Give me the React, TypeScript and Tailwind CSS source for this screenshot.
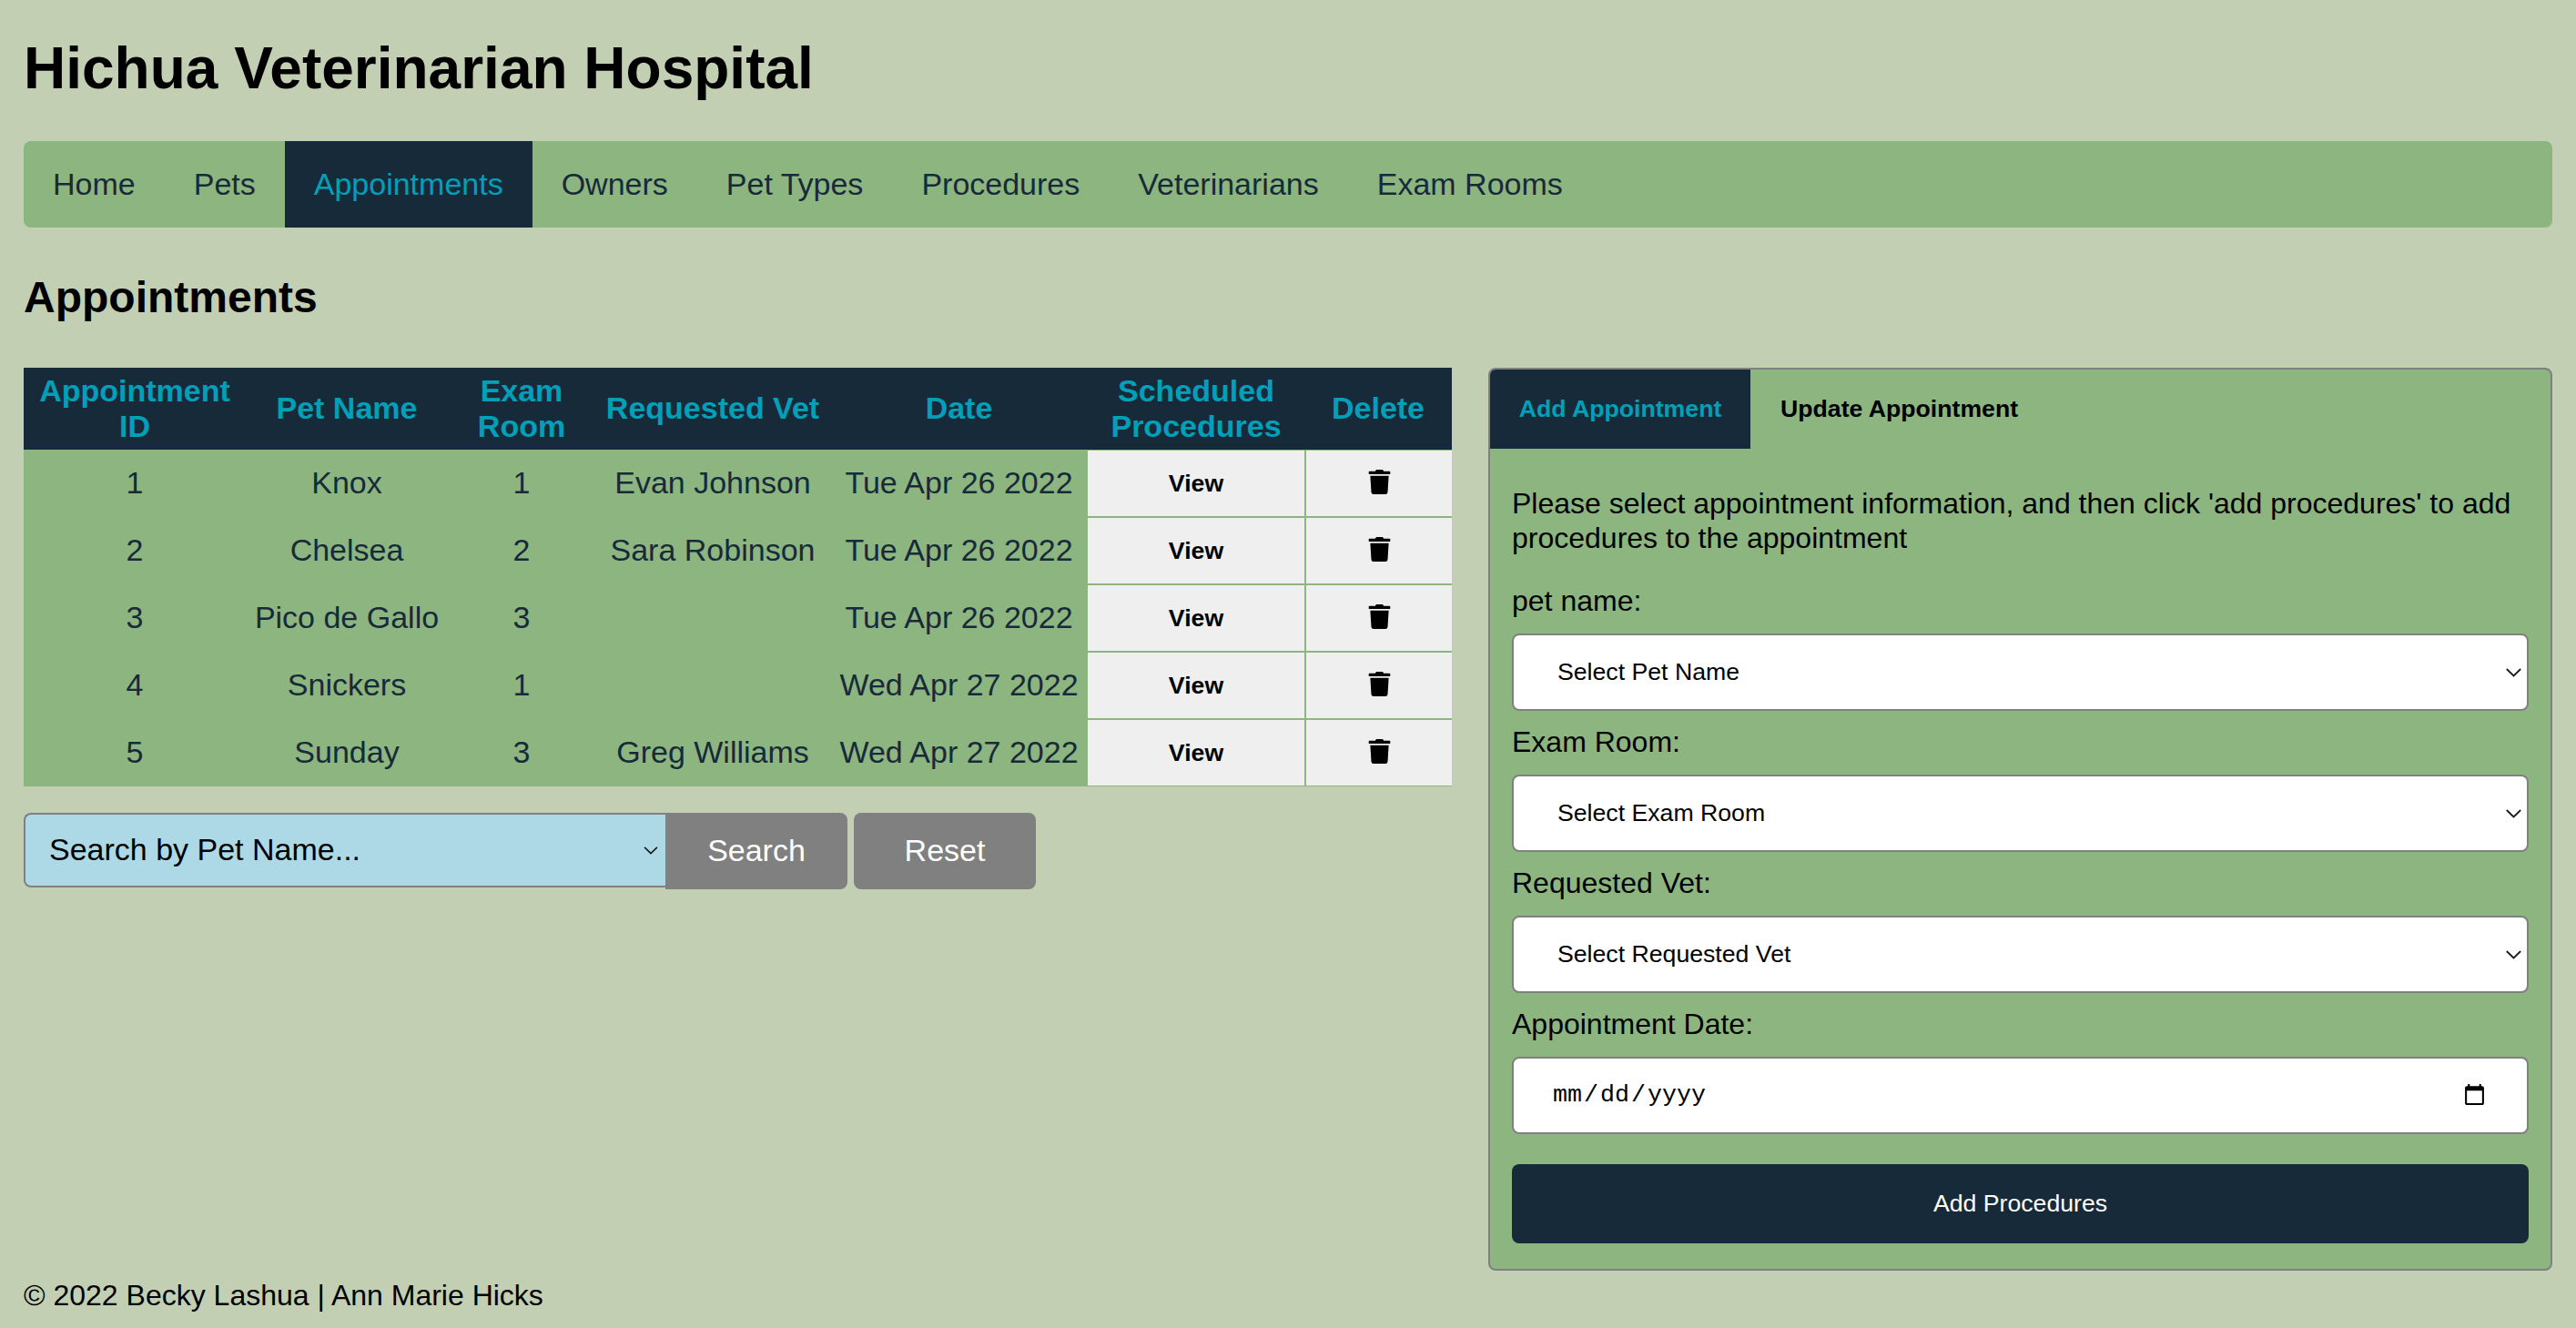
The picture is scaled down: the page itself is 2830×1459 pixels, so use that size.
import { FaTrash } from "react-icons/fa";

const rows = [
  { id: 1, pet: "Knox", room: 1, vet: "Evan Johnson", date: "Tue Apr 26 2022" },
  { id: 2, pet: "Chelsea", room: 2, vet: "Sara Robinson", date: "Tue Apr 26 2022" },
  { id: 3, pet: "Pico de Gallo", room: 3, vet: "", date: "Tue Apr 26 2022" },
  { id: 4, pet: "Snickers", room: 1, vet: "", date: "Wed Apr 27 2022" },
  { id: 5, pet: "Sunday", room: 3, vet: "Greg Williams", date: "Wed Apr 27 2022" },
];

const navItems = ["Home", "Pets", "Appointments", "Owners", "Pet Types", "Procedures", "Veterinarians", "Exam Rooms"];

function Chevron({ className }: { className: string }) {
  return (
    <svg viewBox="0 0 17 10" fill="none" className={className}>
      <path d="M0.8 1 L8.5 8.5 L16.2 1" stroke="#1a1a1a" strokeWidth="1.8" />
    </svg>
  );
}

function FormSelect({ label, placeholder }: { label: string; placeholder: string }) {
  return (
    <div className="mb-4 flex flex-col">
      <label className="mb-[17px] text-[32px] leading-[37px] text-black">{label}</label>
      <div className="relative h-[85px]">
        <select className="h-full w-full appearance-none rounded-lg border-2 border-[#808080] bg-white pl-12 text-[26.67px] leading-[1.15] text-black">
          <option>{placeholder}</option>
        </select>
        <Chevron className="pointer-events-none absolute right-2 top-[38px] h-[10px] w-[17px]" />
      </div>
    </div>
  );
}

export default function App() {
  return (
    <div className="flex min-h-screen flex-col bg-[#c2cfb3] pl-[26px] pr-[26px] pt-[38px] font-['Liberation_Sans',Arial,sans-serif] leading-[1.15] text-black">
      <h1 className="text-[64px] font-bold leading-[74px]">Hichua Veterinarian Hospital</h1>

      <nav className="mt-[43px] flex h-[95px] overflow-hidden rounded-lg bg-[#8db580]">
        {navItems.map((item) => (
          <a
            key={item}
            className={
              item === "Appointments"
                ? "flex items-center bg-[#172a3a] px-8 text-[34px] text-[#00a0b9]"
                : "flex items-center px-8 text-[34px] text-[#172a3a]"
            }
          >
            {item}
          </a>
        ))}
      </nav>

      <h2 className="mb-[50px] mt-[49px] text-[48px] font-bold leading-[55px]">Appointments</h2>

      <main className="flex items-start gap-[40px]">
        <section className="w-[1569px] shrink-0">
          <table className="w-full table-fixed border-separate border-spacing-0 text-[34px]">
            <colgroup>
              <col className="w-[244px]" />
              <col className="w-[222px]" />
              <col className="w-[162px]" />
              <col className="w-[258px]" />
              <col className="w-[283px]" />
              <col className="w-[238px]" />
              <col className="w-[162px]" />
            </colgroup>
            <thead>
              <tr className="h-[90px] bg-[#172a3a] font-bold text-[#00a0b9]">
                <th className="font-bold">Appointment ID</th>
                <th className="font-bold">Pet Name</th>
                <th className="font-bold">Exam Room</th>
                <th className="font-bold">Requested Vet</th>
                <th className="font-bold">Date</th>
                <th className="font-bold">Scheduled Procedures</th>
                <th className="font-bold">Delete</th>
              </tr>
            </thead>
            <tbody>
              {rows.map((r) => (
                <tr key={r.id} className="h-[74px] bg-[#8db580] text-center text-[#172a3a]">
                  <td>{r.id}</td>
                  <td>{r.pet}</td>
                  <td>{r.room}</td>
                  <td>{r.vet}</td>
                  <td>{r.date}</td>
                  <td className="border-y border-[#8db580] bg-[#efefef]">
                    <button className="w-full pb-[6px] text-[26.67px] font-bold text-black">View</button>
                  </td>
                  <td className="border-y border-l-2 border-[#8db580] bg-[#efefef]">
                    <button className="flex w-full justify-center pb-[3px] text-black" aria-label="Delete">
                      <FaTrash size={27} />
                    </button>
                  </td>
                </tr>
              ))}
            </tbody>
          </table>

          <div className="mt-[29px] flex items-start">
            <div className="relative h-[82px] w-[705px]">
              <select className="h-full w-full appearance-none rounded-l-lg border-2 border-r-0 border-[#808080] bg-[#add8e6] pl-[26px] text-[34px] leading-[1.15] text-black">
                <option>Search by Pet Name...</option>
              </select>
              <Chevron className="pointer-events-none absolute right-2 top-[37px] h-[9px] w-[16px]" />
            </div>
            <button className="h-[84px] w-[200px] rounded-r-lg bg-[#808080] text-[34px] text-white">Search</button>
            <button className="ml-[7px] h-[84px] w-[200px] rounded-lg bg-[#808080] text-[34px] text-white">Reset</button>
          </div>
        </section>

        <aside className="h-[992px] w-[1169px] shrink-0 overflow-hidden rounded-lg border-2 border-[#808080] bg-[#8db580]">
          <div className="flex h-[87px]">
            <button className="w-[286px] bg-[#172a3a] text-[26.67px] font-bold text-[#00a0b9]">Add Appointment</button>
            <button className="px-[33px] text-[26.67px] font-bold text-black">Update Appointment</button>
          </div>
          <div className="px-6 pt-[42px]">
            <p className="mb-[32px] text-[32px] leading-[37.5px]">
              Please select appointment information, and then click 'add procedures' to add procedures to the appointment
            </p>
            <FormSelect label="pet name:" placeholder="Select Pet Name" />
            <FormSelect label="Exam Room:" placeholder="Select Exam Room" />
            <FormSelect label="Requested Vet:" placeholder="Select Requested Vet" />
            <div className="flex flex-col">
              <label className="mb-[17px] text-[32px] leading-[37px]">Appointment Date:</label>
              <input
                type="date"
                className="h-[85px] w-full rounded-lg border-2 border-[#808080] bg-white px-[42px] font-['Liberation_Mono',monospace] text-[26.67px] text-black [&::-webkit-datetime-edit-text]:px-[1px]"
              />
            </div>
            <button className="mt-[33px] h-[87px] w-full rounded-lg bg-[#172a3a] text-[26.67px] text-white">Add Procedures</button>
          </div>
        </aside>
      </main>

      <footer className="mt-[9px] text-[32px] leading-[37px]">© 2022 Becky Lashua | Ann Marie Hicks</footer>
    </div>
  );
}
